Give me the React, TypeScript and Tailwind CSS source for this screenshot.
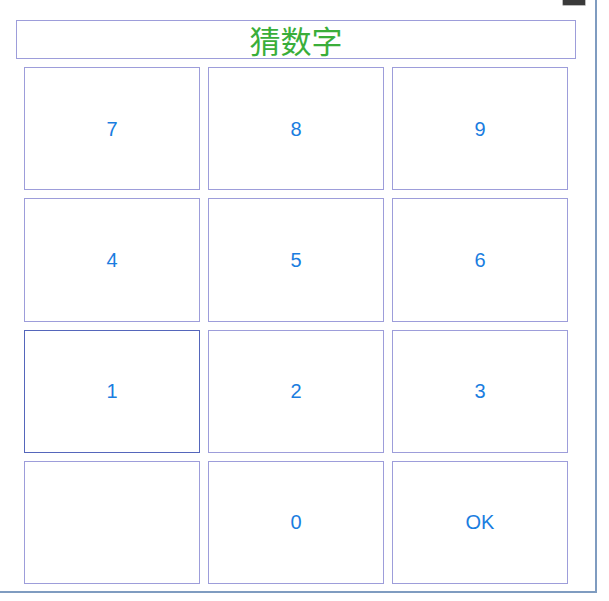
import React from "react";

const keys = ["7", "8", "9", "4", "5", "6", "1", "2", "3", "", "0", "OK"];

export default function App() {
  return (
    <div className="w-[609px] h-[601px] bg-white" style={{ fontFamily: '"Liberation Sans", "Noto Sans CJK SC", sans-serif' }}>
      <div className="relative w-[597px] h-[593px] border-r-2 border-b-2 border-[#7f9cc0] bg-white">
        {/* window control stub */}
        <div className="absolute top-0 right-[9px] w-[24px] h-[6px] rounded-b-[2px] bg-[#3a3a3a] border border-[#bbbbbb] border-t-0" />

        <div className="pt-[20px] pl-[16px]">
          <div className="w-[560px] h-[39px] border border-[#9d9dda] flex items-center justify-center">
            <span className="text-[31px] leading-none text-[#3aae3a] font-['Noto_Sans_CJK_SC',sans-serif] font-normal">
              猜数字
            </span>
          </div>
        </div>

        <div className="mt-[8px] ml-[24px] w-[544px] h-[517px] grid grid-cols-3 grid-rows-4 gap-x-[8px] gap-y-[8px]">
          {keys.map((k, i) => (
            <button
              key={i}
              className={`flex items-center justify-center border bg-white text-[20px] text-[#1a7de0] ${
                k === "1" ? "border-[#5566bb]" : "border-[#9d9dda]"
              }`}
            >
              {k}
            </button>
          ))}
        </div>
      </div>
    </div>
  );
}
